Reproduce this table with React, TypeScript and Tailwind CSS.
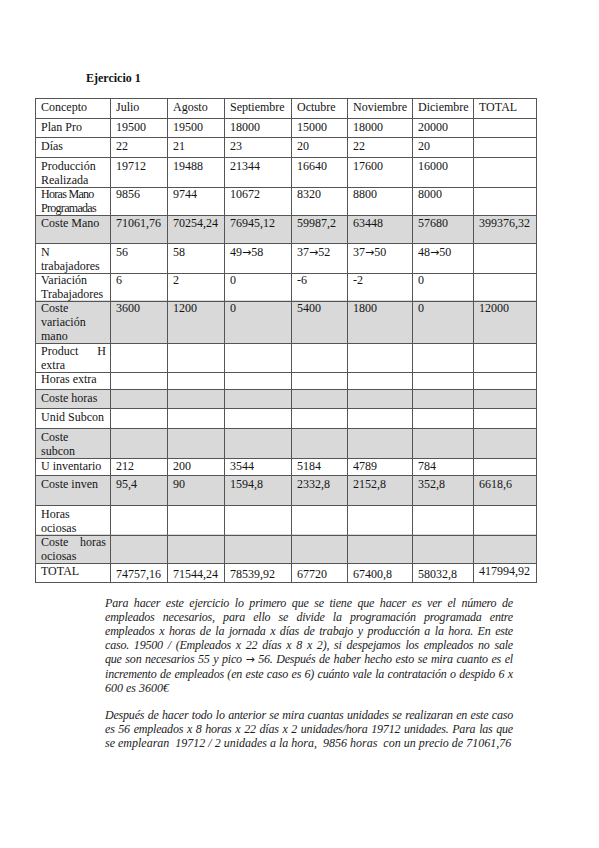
type Row = {
  label: string[];
  vals: string[];
  h: string;
  shade?: boolean;
  justifyFirst?: boolean;
  tight?: boolean;
  lowVals?: boolean;
};

const empty = ['', '', '', '', '', '', ''];

const rows: Row[] = [
  { label: ['Concepto'], vals: ['Julio', 'Agosto', 'Septiembre', 'Octubre', 'Noviembre', 'Diciembre', 'TOTAL'], h: 'h-[20px]' },
  { label: ['Plan  Pro'], vals: ['19500', '19500', '18000', '15000', '18000', '20000', ''], h: 'h-[19px]' },
  { label: ['Días'], vals: ['22', '21', '23', '20', '22', '20', ''], h: 'h-[20px]' },
  { label: ['Producción', 'Realizada'], vals: ['19712', '19488', '21344', '16640', '17600', '16000', ''], h: 'h-[28px]' },
  { label: ['Horas Mano', 'Programadas'], vals: ['9856', '9744', '10672', '8320', '8800', '8000', ''], h: 'h-[29px]', tight: true },
  { label: ['Coste Mano'], vals: ['71061,76', '70254,24', '76945,12', '59987,2', '63448', '57680', '399376,32'], h: 'h-[29px]', shade: true },
  { label: ['N', 'trabajadores'], vals: ['56', '58', '49→58', '37→52', '37→50', '48→50', ''], h: 'h-[28px]' },
  { label: ['Variación', 'Trabajadores'], vals: ['6', '2', '0', '-6', '-2', '0', ''], h: 'h-[28px]' },
  { label: ['Coste', 'variación', 'mano'], vals: ['3600', '1200', '0', '5400', '1800', '0', '12000'], h: 'h-[43px]', shade: true },
  { label: ['Product H', 'extra'], vals: empty, h: 'h-[28px]', justifyFirst: true },
  { label: ['Horas extra'], vals: empty, h: 'h-[19px]' },
  { label: ['Coste horas'], vals: empty, h: 'h-[19px]', shade: true },
  { label: ['Unid Subcon'], vals: empty, h: 'h-[20px]' },
  { label: ['Coste', 'subcon'], vals: empty, h: 'h-[29px]', shade: true },
  { label: ['U inventario'], vals: ['212', '200', '3544', '5184', '4789', '784', ''], h: 'h-[18px]' },
  { label: ['Coste inven'], vals: ['95,4', '90', '1594,8', '2332,8', '2152,8', '352,8', '6618,6'], h: 'h-[30px]', shade: true },
  { label: ['Horas', 'ociosas'], vals: empty, h: 'h-[28px]' },
  { label: ['Coste horas', 'ociosas'], vals: empty, h: 'h-[29px]', shade: true, justifyFirst: true },
  { label: ['TOTAL'], vals: ['74757,16', '71544,24', '78539,92', '67720', '67400,8', '58032,8', '417994,92'], h: 'h-[20px]', lowVals: true },
];

const para1 = [
  'Para hacer este ejercicio lo primero que se tiene que hacer es ver el número de',
  'empleados necesarios, para ello se divide la programación programada entre',
  'empleados x horas de la jornada x días de trabajo y producción a la hora. En este',
  'caso. 19500 / (Empleados x 22 días x 8 x 2), si despejamos los empleados no sale',
  'que son necesarios 55 y pico → 56. Después de haber hecho esto se mira cuanto es el',
  'incremento de empleados (en este caso es 6) cuánto vale la contratación o despido 6 x',
];

const para2 = [
  'Después de hacer todo lo anterior se mira cuantas unidades se realizaran en este caso',
  'es 56 empleados x 8 horas x 22 días x 2 unidades/hora 19712 unidades. Para las que',
];

// the arrow comes from the Symbol font in the source, DejaVu's is closer in size
function withArrow(text: string) {
  const parts = text.split('→');
  if (parts.length === 1) return text;
  return (
    <>
      {parts[0]}
      <span className="font-['DejaVu_Sans',sans-serif] not-italic text-[11px]">→</span>
      {parts[1]}
    </>
  );
}

function Cell({ children, first, low }: { children: React.ReactNode; first?: boolean; low?: boolean }) {
  return (
    <div
      className={`border-r border-b border-[#555] pl-[5px] pr-[4px] ${low ? 'pt-[4px]' : 'pt-px'} ${first ? '' : 'whitespace-nowrap'}`}
    >
      {children}
    </div>
  );
}

export default function App() {
  return (
    <div className="min-h-screen bg-white pt-[71px] pl-[35px] font-['Liberation_Serif',serif] text-[12px] leading-[14px] text-[#141414]">
      {/* Title */}
      <div className="ml-[51px] font-bold">Ejercicio 1</div>

      {/* Table */}
      <div className="mt-[13px] w-fit border-l border-t border-[#555]">
        {rows.map((row, i) => (
          <div
            key={i}
            className={`grid grid-cols-[75px_57px_57px_67px_56px_65px_61px_63px] ${row.h} ${row.shade ? 'bg-[#d9d9d9]' : 'bg-white'}`}
          >
            <Cell first>
              {row.label.map((line, j) => (
                <div
                  key={j}
                  className={`${row.justifyFirst && j === 0 ? 'text-justify [text-align-last:justify]' : ''} ${row.tight ? 'tracking-[-0.7px]' : ''}`}
                >
                  {line}
                </div>
              ))}
            </Cell>
            {row.vals.map((v, j) => (
              <Cell key={j} low={row.lowVals && j < 6}>
                {withArrow(v)}
              </Cell>
            ))}
          </div>
        ))}
      </div>

      {/* Explanation */}
      <div className="mt-[13px] ml-[70px] w-[408px] italic text-[#222]">
        <div>
          {para1.map((line, i) => (
            <div key={i} className="whitespace-nowrap tracking-[-0.2px] text-justify [text-align-last:justify]">
              {withArrow(line)}
            </div>
          ))}
          <div>600 es 3600€</div>
        </div>
        <div className="mt-[13px]">
          {para2.map((line, i) => (
            <div key={i} className="whitespace-nowrap tracking-[-0.2px] text-justify [text-align-last:justify]">
              {line}
            </div>
          ))}
          <div className="whitespace-pre">se emplearan  19712 / 2 unidades a la hora,  9856 horas  con un precio de 71061,76</div>
        </div>
      </div>
    </div>
  );
}
